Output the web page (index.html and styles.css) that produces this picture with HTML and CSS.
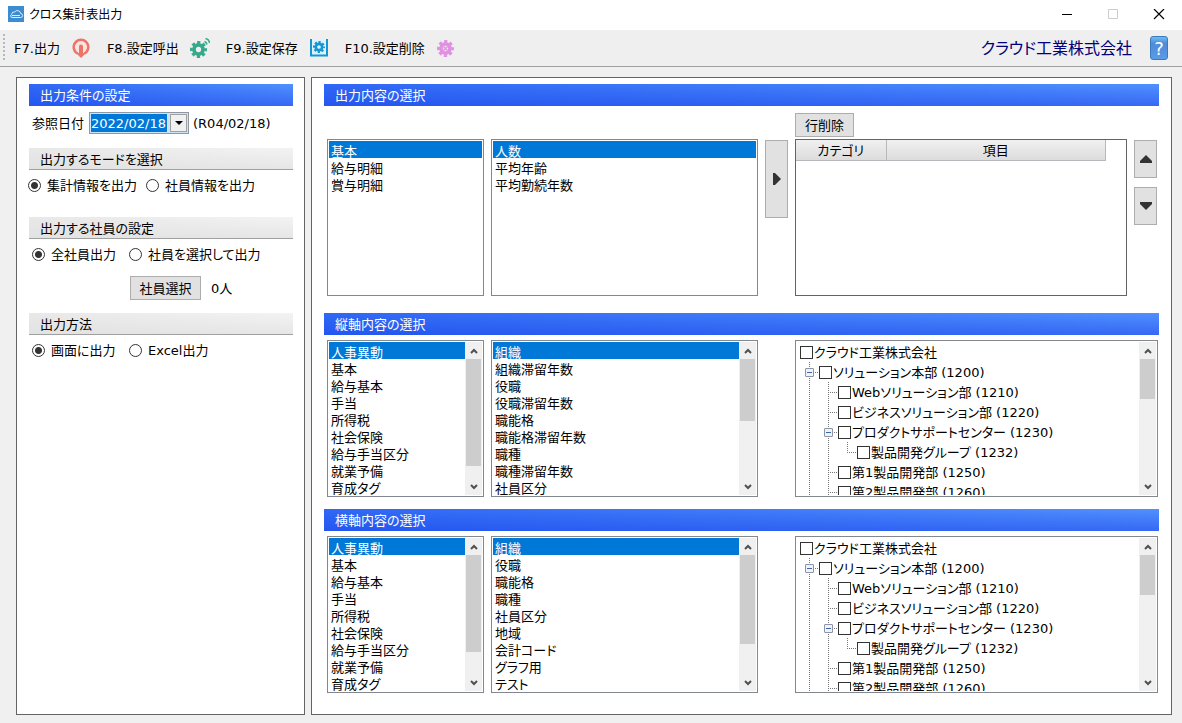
FILE: index.html
```html
<!DOCTYPE html>
<html lang="ja">
<head>
<meta charset="utf-8">
<title>クロス集計表出力</title>
<link rel="stylesheet" href="styles.css">
</head>
<body>
<svg class="defs" aria-hidden="true">
  <symbol id="up" viewBox="0 0 8 6"><path d="M1 5 4 2 7 5" fill="none" stroke="#505050" stroke-width="2"/></symbol>
  <symbol id="down" viewBox="0 0 8 6"><path d="M1 1 4 4 7 1" fill="none" stroke="#505050" stroke-width="2"/></symbol>
  <symbol id="gear" viewBox="1 1 18 18"><g fill="none" stroke="currentColor"><circle cx="10" cy="10" r="4.800" stroke-width="4"/><circle cx="10" cy="10" r="7.500" stroke-width="3" stroke-dasharray="3.400 2.490" stroke-dashoffset="1.700"/></g></symbol>
</svg>

<header class="titlebar">
  <svg class="app-icon" viewBox="0 0 16 16"><rect width="16" height="16" fill="#3c8cd2"/><path d="M4 11.500h8.500a2 2 0 0 0 .2-4 3.300 3.300 0 0 0-6-1.500 2.500 2.500 0 0 0-3 2.300 1.700 1.700 0 0 0 .3 3.200zM4 9.500h8" fill="none" stroke="#d9ecfb"/></svg>
  <h1 class="title">クロス集計表出力</h1>
  <div class="window-buttons">
    <button type="button" aria-label="最小化"><svg viewBox="0 0 12 12"><path d="M1 5.500h10" stroke="#000"/></svg></button>
    <button type="button" aria-label="最大化" disabled><svg viewBox="0 0 12 12"><path d="M1.500.500h9v9h-9z" fill="none" stroke="#ccc"/></svg></button>
    <button type="button" aria-label="閉じる"><svg viewBox="0 0 12 12"><path d="m1 0 10 10M11 0 1 10" stroke="#000" stroke-width="1.200"/></svg></button>
  </div>
</header>

<nav class="toolbar">
  <span class="grip"></span>
  <button type="button" class="tool">F7.出力<svg class="red" viewBox="0 0 20 20"><path d="M6.500 15.500A7.300 7.300 0 1 1 13.500 15.500" fill="#fbe3df" stroke="currentColor" stroke-width="2.500"/><path d="M8 8.500a2 2 0 0 1 4 0V15h3l-5 5-5-5h3z" fill="currentColor"/></svg></button>
  <button type="button" class="tool">F8.設定呼出<svg class="green" viewBox="0 0 20 20"><use href="#gear" x="0" y="3" width="17" height="17"/><path d="M14.500 3.500a4 4 0 0 1 2.500 3M15.500.500a5 5 0 0 1 4 4.500" fill="none" stroke="currentColor" stroke-width="1.500"/></svg></button>
  <button type="button" class="tool">F9.設定保存<svg class="cyan" viewBox="0 0 20 20"><path d="M2 1.500h16v16H2z" fill="#dff2fb"/><path d="M2 1v16.500h16V1" fill="none" stroke="currentColor" stroke-width="2"/><use href="#gear" x="4" y="3" width="12" height="12"/></svg></button>
  <button type="button" class="tool">F10.設定削除<svg class="pink" viewBox="0 0 20 20"><use href="#gear" x="1" y="2" width="17" height="17"/><path d="m7.500 8.500 4 4m0-4-4 4" stroke="currentColor" stroke-width="1.500"/></svg></button>
  <span class="company">クラウド工業株式会社</span>
  <button type="button" class="help" aria-label="ヘルプ">?</button>
</nav>

<main class="workspace">
  <section class="panel conditions">
    <h2 class="heading">出力条件の設定</h2>
    <div class="date-row">
      <label for="date">参照日付</label>
      <span class="date-box">
        <input id="date" class="date" type="text" value="2022/02/18">
        <button type="button" class="date-drop" aria-label="カレンダー"><svg viewBox="0 0 8 4"><path d="M0 0h8L4 4z"/></svg></button>
      </span>
      <span class="era">(R04/02/18)</span>
    </div>

    <h3 class="subheading">出力するモードを選択</h3>
    <div class="options modes">
      <label class="option"><input type="radio" name="mode" checked>集計情報を出力</label>
      <label class="option"><input type="radio" name="mode">社員情報を出力</label>
    </div>

    <h3 class="subheading">出力する社員の設定</h3>
    <div class="options">
      <label class="option"><input type="radio" name="staff" checked>全社員出力</label>
      <label class="option"><input type="radio" name="staff">社員を選択して出力</label>
    </div>
    <div class="staff-row"><button type="button" class="button">社員選択</button><span>0人</span></div>

    <h3 class="subheading">出力方法</h3>
    <div class="options">
      <label class="option"><input type="radio" name="method" checked>画面に出力</label>
      <label class="option"><input type="radio" name="method">Excel出力</label>
    </div>
  </section>

  <section class="panel contents">
    <h2 class="heading">出力内容の選択</h2>
    <div class="fields output-fields">
      <button type="button" class="button delete-row">行削除</button>
      <div class="listbox category">
        <select size="9" aria-label="出力カテゴリ">
          <option selected>基本</option><option>給与明細</option><option>賞与明細</option>
        </select>
      </div>
      <div class="listbox">
        <select size="9" aria-label="出力項目">
          <option selected>人数</option><option>平均年齢</option><option>平均勤続年数</option>
        </select>
      </div>
      <button type="button" class="button add" aria-label="追加"><svg viewBox="0 0 8 12"><path d="M0 0h2l6 6-6 6H0z"/></svg></button>
      <div class="table-box">
        <table class="table">
          <thead><tr><th scope="col" class="col-category">カテゴリ</th><th scope="col">項目</th></tr></thead>
        </table>
      </div>
      <div class="order">
        <button type="button" class="button" aria-label="上へ"><svg viewBox="0 0 12 8"><path d="M0 8V6l6-6 6 6v2z"/></svg></button>
        <button type="button" class="button" aria-label="下へ"><svg viewBox="0 0 12 8"><path d="M0 0v2l6 6 6-6V0z"/></svg></button>
      </div>
    </div>

    <h2 class="heading">縦軸内容の選択</h2>
    <div class="fields">
      <div class="listbox">
        <select size="9" aria-label="縦軸カテゴリ">
          <option selected>人事異動</option><option>基本</option><option>給与基本</option><option>手当</option><option>所得税</option><option>社会保険</option><option>給与手当区分</option><option>就業予備</option><option>育成タグ</option>
        </select>
        <div class="scrollbar" aria-hidden="true"><svg><use href="#up"/></svg><span class="track"><span class="thumb thumb-long"></span></span><svg><use href="#down"/></svg></div>
      </div>
      <div class="listbox">
        <select size="9" aria-label="縦軸項目">
          <option selected>組織</option><option>組織滞留年数</option><option>役職</option><option>役職滞留年数</option><option>職能格</option><option>職能格滞留年数</option><option>職種</option><option>職種滞留年数</option><option>社員区分</option>
        </select>
        <div class="scrollbar" aria-hidden="true"><svg><use href="#up"/></svg><span class="track"><span class="thumb thumb-half"></span></span><svg><use href="#down"/></svg></div>
      </div>
      <div class="listbox tree-box">
        <ul class="tree" role="tree" aria-label="縦軸組織">
          <li><label><input type="checkbox">クラウド工業株式会社</label></li>
          <li><i class="line node"></i><label><input type="checkbox">ソリューション本部 (1200)</label></li>
          <li><i class="line"></i><i class="line tee"></i><label><input type="checkbox">Webソリューション部 (1210)</label></li>
          <li><i class="line"></i><i class="line tee"></i><label><input type="checkbox">ビジネスソリューション部 (1220)</label></li>
          <li><i class="line"></i><i class="line node"></i><label><input type="checkbox">プロダクトサポートセンター (1230)</label></li>
          <li><i class="line"></i><i class="line"></i><i class="line tee last"></i><label><input type="checkbox">製品開発グループ (1232)</label></li>
          <li><i class="line"></i><i class="line tee"></i><label><input type="checkbox">第1製品開発部 (1250)</label></li>
          <li><i class="line"></i><i class="line tee"></i><label><input type="checkbox">第2製品開発部 (1260)</label></li>
        </ul>
        <div class="scrollbar" aria-hidden="true"><svg><use href="#up"/></svg><span class="track"><span class="thumb thumb-short"></span></span><svg><use href="#down"/></svg></div>
      </div>
    </div>

    <h2 class="heading">横軸内容の選択</h2>
    <div class="fields">
      <div class="listbox">
        <select size="9" aria-label="横軸カテゴリ">
          <option selected>人事異動</option><option>基本</option><option>給与基本</option><option>手当</option><option>所得税</option><option>社会保険</option><option>給与手当区分</option><option>就業予備</option><option>育成タグ</option>
        </select>
        <div class="scrollbar" aria-hidden="true"><svg><use href="#up"/></svg><span class="track"><span class="thumb thumb-medium"></span></span><svg><use href="#down"/></svg></div>
      </div>
      <div class="listbox">
        <select size="9" aria-label="横軸項目">
          <option selected>組織</option><option>役職</option><option>職能格</option><option>職種</option><option>社員区分</option><option>地域</option><option>会計コード</option><option>グラフ用</option><option>テスト</option>
        </select>
        <div class="scrollbar" aria-hidden="true"><svg><use href="#up"/></svg><span class="track"><span class="thumb thumb-wide"></span></span><svg><use href="#down"/></svg></div>
      </div>
      <div class="listbox tree-box">
        <ul class="tree" role="tree" aria-label="横軸組織">
          <li><label><input type="checkbox">クラウド工業株式会社</label></li>
          <li><i class="line node"></i><label><input type="checkbox">ソリューション本部 (1200)</label></li>
          <li><i class="line"></i><i class="line tee"></i><label><input type="checkbox">Webソリューション部 (1210)</label></li>
          <li><i class="line"></i><i class="line tee"></i><label><input type="checkbox">ビジネスソリューション部 (1220)</label></li>
          <li><i class="line"></i><i class="line node"></i><label><input type="checkbox">プロダクトサポートセンター (1230)</label></li>
          <li><i class="line"></i><i class="line"></i><i class="line tee last"></i><label><input type="checkbox">製品開発グループ (1232)</label></li>
          <li><i class="line"></i><i class="line tee"></i><label><input type="checkbox">第1製品開発部 (1250)</label></li>
          <li><i class="line"></i><i class="line tee"></i><label><input type="checkbox">第2製品開発部 (1260)</label></li>
        </ul>
        <div class="scrollbar" aria-hidden="true"><svg><use href="#up"/></svg><span class="track"><span class="thumb thumb-short"></span></span><svg><use href="#down"/></svg></div>
      </div>
    </div>
  </section>
</main>
</body>
</html>
```
FILE: styles.css
```css
*, *::before, *::after { box-sizing: border-box; }

body {
  display: flex;
  flex-direction: column;
  min-height: 100vh;
  margin: 0;
  background: #f0f0f0;
  color: #000;
  font-family: "DejaVu Sans", "Noto Sans CJK JP", sans-serif;
  font-size: 13px;
  line-height: 17px;
  font-feature-settings: "palt";
}

button, input, select {
  margin: 0;
  padding: 0;
  color: inherit;
  font: inherit;
  font-feature-settings: inherit;
}

.defs { display: none; }

/* Title bar */
.titlebar {
  display: flex;
  align-items: center;
  gap: 5px;
  height: 30px;
  padding-left: 8px;
  background: #fff;
}
.app-icon { width: 16px; height: 16px; margin-bottom: 2px; }
.title { flex: 1; margin: 0; font-size: 12px; font-weight: 400; }
.window-buttons { display: flex; }
.window-buttons button {
  display: grid;
  place-items: center;
  width: 46px;
  height: 30px;
  border: 0;
  background: none;
}
.window-buttons svg { width: 12px; height: 12px; }

/* Toolbar */
.toolbar {
  display: flex;
  align-items: center;
  height: 37px;
  padding-right: 14px;
  padding-left: 3px;
  border-bottom: 1px solid #a0a0a0;
  background: #efefef;
}
.grip {
  width: 2px;
  height: 28px;
  margin-right: 9px;
  background: repeating-linear-gradient(#b8b8bc 0 2px, transparent 2px 4px);
}
.tool {
  display: flex;
  align-items: center;
  gap: 11px;
  margin-right: 16px;
  border: 0;
  background: none;
  white-space: nowrap;
}
.tool svg { width: 20px; height: 20px; }
.red { color: #ec7468; }
.green { color: #35a98b; }
.cyan { color: #1296d4; }
.pink { color: #e291e2; }
.company { margin-left: auto; color: #000078; font-size: 16px; }
.help {
  width: 18px;
  height: 24px;
  margin-left: 18px;
  border: 1px solid #3c78bc;
  border-radius: 3px;
  background: linear-gradient(#6cbcf2, #4e8ad8 30%, #5a9ce6);
  color: #fff;
  font-size: 18px;
}

/* Panels */
.workspace {
  display: flex;
  flex: 1;
  gap: 6px;
  padding: 10px 10px 8px 16px;
}
.panel {
  padding: 6px 12px 0;
  border: 1px solid #646464;
  background: #fff;
}
.conditions { flex: 0 0 289px; padding-right: 11px; }
.contents { flex: 1; min-width: 0; }

.heading, .subheading {
  height: 22px;
  margin: 0;
  padding-left: 11px;
  font-size: 13px;
  font-weight: 400;
  line-height: 23px;
}
.heading {
  background: linear-gradient(to right, #1446ec88, transparent), linear-gradient(#5090fe, #3668f4);
  color: #fff;
}
.subheading {
  border-bottom: 1px solid #a0a0a0;
  background: linear-gradient(to right, #dfdfdf88, transparent), linear-gradient(#f3f3f3, #e6e6e6);
}

/* Output conditions */
.date-row {
  display: flex;
  align-items: center;
  gap: 4px;
  height: 22px;
  margin: 6px 0 14px 3px;
}
.date-box {
  display: flex;
  width: 100px;
  height: 22px;
  margin-left: 1px;
  padding: 1px;
  border: 1px solid #8c98a4;
  background: #cce4f7;
}
.date {
  flex: 1;
  min-width: 0;
  margin-right: 3px;
  border: 0;
  background: #0078d7;
  color: #fff;
}
.date-drop {
  display: grid;
  place-items: center;
  width: 17px;
  border: 1px solid #a0a0a0;
  background: #f0f0f0;
}
.date-drop svg { width: 8px; height: 4px; }

.options {
  display: grid;
  grid-template-columns: 97px 1fr;
  align-items: center;
  height: 30px;
  margin-left: 3px;
}
.modes { grid-template-columns: 118px 1fr; margin: 0 0 17px -1px; }
.option { display: flex; align-items: center; gap: 6px; white-space: nowrap; }
.option input {
  appearance: none;
  width: 13px;
  height: 13px;
  border: 1px solid #333;
  border-radius: 50%;
}
.option input:checked { background: radial-gradient(circle, #333 3px, transparent 4px); }
.staff-row {
  display: flex;
  align-items: center;
  gap: 10px;
  margin: 7px 0 13px 101px;
}

.button {
  display: grid;
  place-items: center;
  height: 24px;
  border: 1px solid #adadad;
  background: #e1e1e1;
}
.button svg { fill: #333; }
.staff-row .button { width: 71px; }

/* Output contents */
.fields {
  display: grid;
  grid-template-columns: 157fr 267fr 23px 332fr 24px;
  gap: 2px 7px;
  margin: 5px 1px 12px 3px;
}
.output-fields { margin-top: 7px; margin-bottom: 17px; }
.delete-row { grid-column: 4; justify-self: start; width: 59px; }
.category { grid-column: 1; }
.listbox {
  display: flex;
  height: 157px;
  padding: 1px;
  border: 1px solid #828790;
  background: #fff;
}
.listbox select {
  flex: 1;
  min-width: 0;
  overflow: hidden;
  border: 0;
  border-radius: 0;
  outline: 0;
  background: #fff;
}
.listbox option {
  height: 17px;
  min-height: 17px;
  padding: 0 2px 2px;
  line-height: 15px;
}
.listbox option:checked {
  background-image: linear-gradient(#0078d7, #0078d7);
  -webkit-text-fill-color: #fff;
}

.scrollbar {
  display: flex;
  flex-direction: column;
  align-items: center;
  width: 17px;
  padding: 5px 0 4px;
  background: #f0f0f0;
}
.scrollbar svg { width: 8px; height: 6px; margin: 1px 0; }
.track { flex: 1; width: 15px; margin: 4px 0; }
.thumb { display: block; background: #cdcdcd; }
.thumb-long { height: 89%; }
.thumb-medium { height: 81%; }
.thumb-wide { height: 74%; }
.thumb-half { height: 52%; }
.thumb-short { height: 33%; }

.add { height: 78px; margin-top: 1px; }
.add svg { width: 8px; height: 12px; }
.order { display: grid; align-content: start; gap: 9px; padding-top: 1px; }
.order .button { width: 23px; height: 38px; }
.order svg { width: 12px; height: 8px; }

.table-box { padding-right: 20px; border: 1px solid #646464; }
.table { width: 100%; border-collapse: collapse; table-layout: fixed; }
.table th {
  height: 20px;
  padding: 2px 0 0;
  border: solid #b8b8bc;
  border-width: 0 1px 1px 0;
  background: linear-gradient(#f0f0f0, #dcdcdc);
  font-weight: 400;
}
.col-category { width: 90px; }

/* Organisation tree */
.tree-box { grid-column: 4 / 6; }
.tree {
  flex: 1;
  min-width: 0;
  margin: 0;
  padding: 0 0 0 3px;
  overflow: hidden;
  list-style: none;
}
.tree li, .tree label { display: flex; align-items: center; height: 20px; white-space: nowrap; }
.tree label { gap: 1px; }
.tree input {
  appearance: none;
  width: 13px;
  height: 13px;
  border: 1px solid #333;
  background: #fff;
}
.line {
  display: grid;
  place-items: center;
  width: 19px;
  height: 20px;
  background: repeating-linear-gradient(#777 0 1px, transparent 1px 2px) 9px 0 / 1px 100% no-repeat;
}
.tee, .node {
  background:
    repeating-linear-gradient(#777 0 1px, transparent 1px 2px) 9px 0 / 1px 100% no-repeat,
    repeating-linear-gradient(to right, #777 0 1px, transparent 1px 2px) 9px 10px / 10px 1px no-repeat;
}
.last { background-size: 1px 10px, 10px 1px; }
.node::before {
  content: "";
  width: 9px;
  height: 9px;
  border: 1px solid #8c94a4;
  border-radius: 1px;
  background: linear-gradient(#3c64b4, #3c64b4) center / 5px 1px no-repeat, #f0f2f6;
}
```
